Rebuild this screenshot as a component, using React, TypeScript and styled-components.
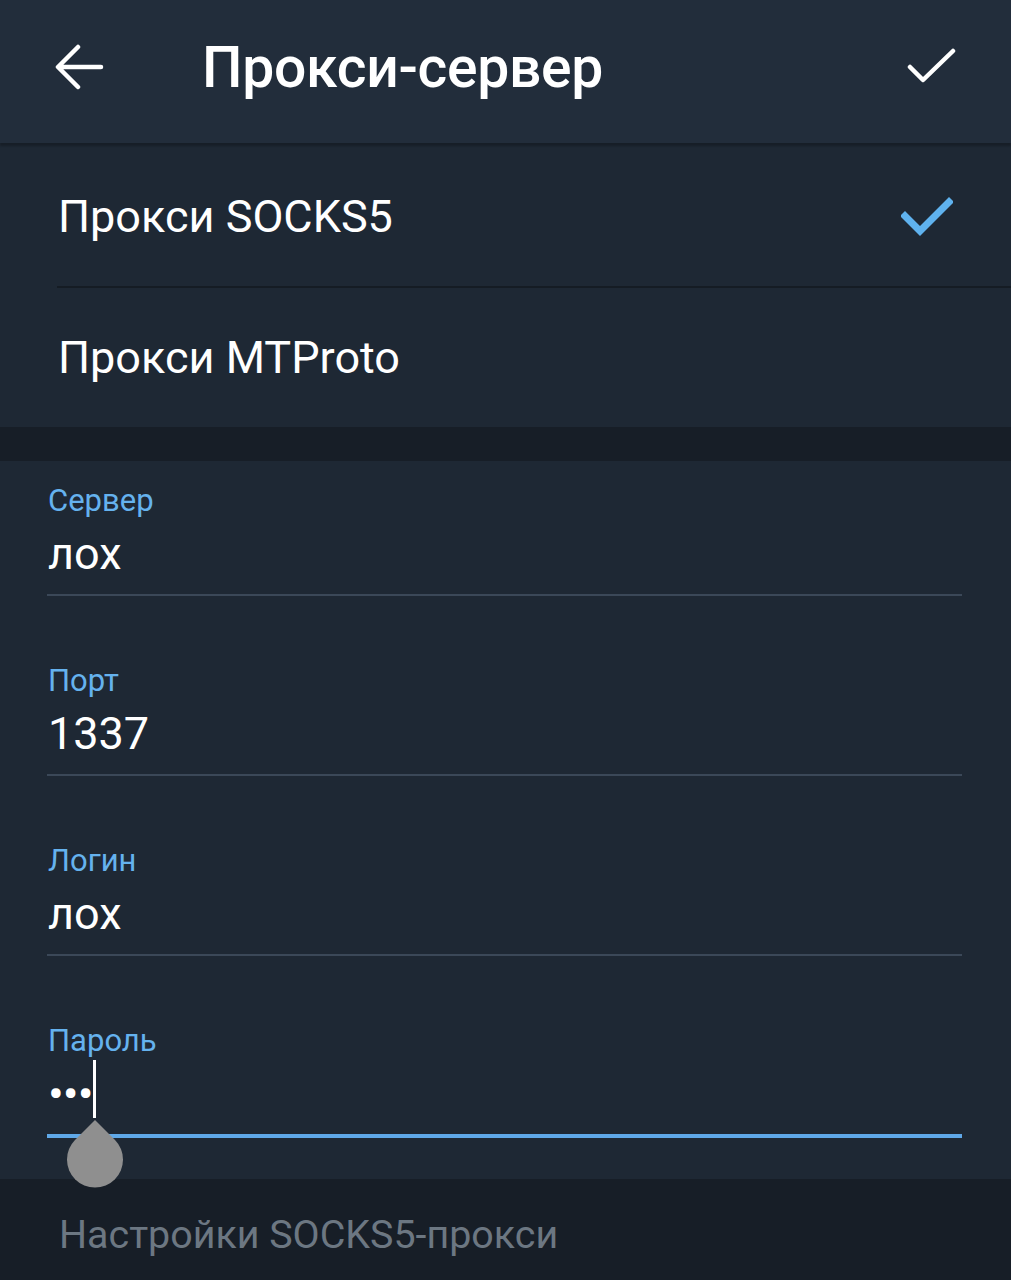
import React from "react";
import styled, { createGlobalStyle } from "styled-components";

const Global = createGlobalStyle`
  html, body { margin: 0; padding: 0; background: #1e2834; }
  body { font-family: Roboto, "Noto Sans", "Liberation Sans", sans-serif; }
  * { box-sizing: border-box; }
`;

const Page = styled.div`
  width: 1011px;
  height: 1280px;
  overflow: hidden;
  display: flex;
  flex-direction: column;
  background: #1e2834;
`;

const Header = styled.header`
  height: 143px;
  flex: none;
  display: flex;
  align-items: center;
  padding: 0 52px 9px 55px;
  background: #222d3b;
  box-shadow: 0 3px 2px rgba(0, 0, 0, 0.25);
  position: relative;
  z-index: 1;
`;

const Title = styled.h1`
  margin: 0 0 0 97px;
  flex: 1;
  font-size: 57px;
  font-weight: 500;
  color: #ffffff;
  letter-spacing: -0.3px;
  line-height: 1;
`;

const IconBox = styled.div`
  display: flex;
  align-items: center;
  justify-content: center;
`;

const OptionList = styled.div`
  background: #1e2834;
  display: flex;
  flex-direction: column;
  padding-top: 4px;
`;

const OptionRow = styled.div<{ $h: number }>`
  height: ${(p) => p.$h}px;
  display: flex;
  align-items: center;
  justify-content: space-between;
  padding: 0 58px 0 58px;
  font-size: 45px;
  color: #ffffff;
`;

const Divider = styled.div`
  height: 2px;
  margin-left: 57px;
  background: #151c24;
`;

const Band = styled.div`
  height: 34px;
  flex: none;
  background: #171e27;
`;

const Form = styled.div`
  display: flex;
  flex-direction: column;
  padding: 0 49px 41px 47px;
  background: #1e2834;
`;

const Field = styled.div`
  display: flex;
  flex-direction: column;
  padding-top: 22px;
  & + & {
    margin-top: 45px;
  }
`;

const Label = styled.div`
  height: 36px;
  line-height: 36px;
  font-size: 31px;
  color: #65b2ee;
  padding-left: 1px;
`;

const Value = styled.div`
  margin-top: 7px;
  height: 56px;
  line-height: 56px;
  font-size: 45px;
  color: #ffffff;
  padding-left: 1px;
  position: relative;
`;

const Dots = styled.span`
  font-size: 47px;
  letter-spacing: -1px;
`;

const Underline = styled.div<{ $active?: boolean }>`
  margin-top: 12px;
  height: ${(p) => (p.$active ? 4 : 2)}px;
  background: ${(p) => (p.$active ? "#5fa8e8" : "#3b4858")};
`;

const Cursor = styled.div`
  position: absolute;
  left: 46px;
  top: -6px;
  width: 3px;
  height: 58px;
  background: #ffffff;
`;

const Handle = styled.svg`
  position: absolute;
  left: 18px;
  top: 52px;
  z-index: 2;
`;

const Footer = styled.div`
  flex: 1;
  background: #171e27;
  padding: 32px 0 0 59px;
  font-size: 39.4px;
  color: #6c7782;
`;

const BackIcon = () => (
  <svg width="50" height="50" viewBox="0 0 50 50">
    <path
      d="M46 25 H4 M23 5 L3 25 L23 45"
      fill="none"
      stroke="#fff"
      strokeWidth="4.5"
      strokeLinecap="round"
      strokeLinejoin="round"
    />
  </svg>
);

const DoneIcon = () => (
  <svg width="52" height="40" viewBox="0 0 52 40">
    <path
      d="M3 20 L16 33 L46 4"
      fill="none"
      stroke="#fff"
      strokeWidth="4.5"
      strokeLinecap="round"
      strokeLinejoin="round"
    />
  </svg>
);

const BlueCheck = () => (
  <svg width="52" height="42" viewBox="0 0 52 42">
    <path
      d="M4 20 L19 35 L48 6"
      fill="none"
      stroke="#5fb2ee"
      strokeWidth="7"
      strokeLinecap="square"
    />
  </svg>
);

type FieldData = { label: string; value?: string; password?: boolean };

const fields: FieldData[] = [
  { label: "Сервер", value: "лох" },
  { label: "Порт", value: "1337" },
  { label: "Логин", value: "лох" },
  { label: "Пароль", password: true },
];

export default function App() {
  return (
    <Page>
      <Global />
      <Header>
        <IconBox>
          <BackIcon />
        </IconBox>
        <Title>Прокси-сервер</Title>
        <IconBox>
          <DoneIcon />
        </IconBox>
      </Header>
      <OptionList>
        <OptionRow $h={139}>
          <span>Прокси SOCKS5</span>
          <BlueCheck />
        </OptionRow>
        <Divider />
        <OptionRow $h={139}>
          <span>Прокси MTProto</span>
        </OptionRow>
      </OptionList>
      <Band />
      <Form>
        {fields.map((f) => (
          <Field key={f.label}>
            <Label>{f.label}</Label>
            <Value>
              {f.password ? (
                <>
                  <Dots>•••</Dots>
                  <Cursor />
                  <Handle width="60" height="70" viewBox="0 0 60 70">
                    <path
                      d="M30 2 L50 22 A28 28 0 1 1 10 22 Z"
                      fill="#8f8f8f"
                    />
                  </Handle>
                </>
              ) : (
                f.value
              )}
            </Value>
            <Underline $active={f.password} />
          </Field>
        ))}
      </Form>
      <Footer>Настройки SOCKS5-прокси</Footer>
    </Page>
  );
}
